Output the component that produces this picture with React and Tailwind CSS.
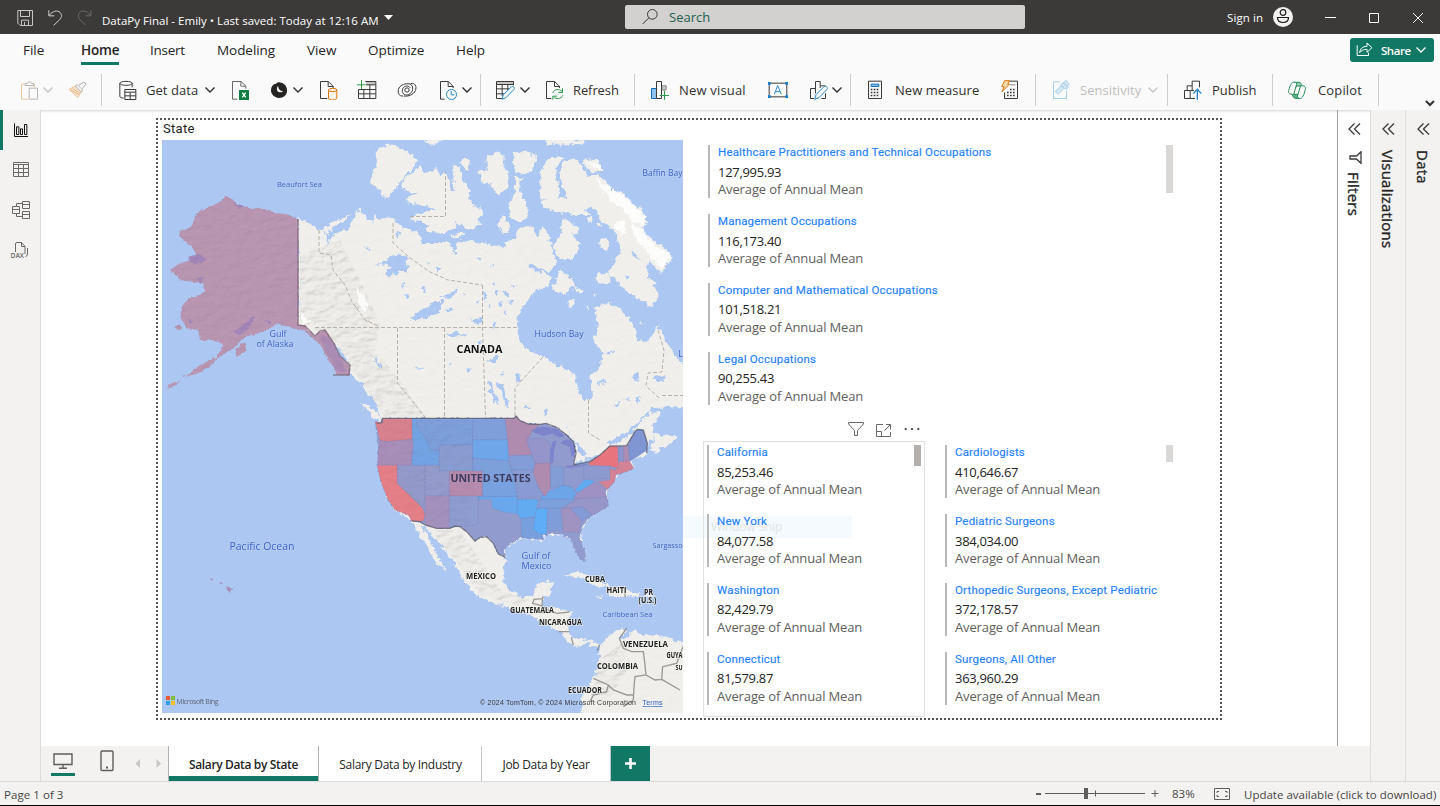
import React from "react";

/* ---------- shared pieces ---------- */

// Draws an icon on a grid of three units per pixel.
function Glyph({ x, y, w = 20, h = 20, className = "", children }) {
  return (
    <svg
      width={w}
      height={h}
      viewBox={`${x} ${y} ${w * 3} ${h * 3}`}
      className={"block shrink-0 " + className}
      fill="none"
      stroke="#3b3a39"
      strokeWidth="3"
    >
      {children}
    </svg>
  );
}

function Chevron({ className = "", color = "#323130" }) {
  return (
    <svg width="12" height="20" viewBox="0 0 12 20" className={"block shrink-0 " + className} fill="none" stroke={color} strokeWidth="1.4">
      <path d="M1.5 7.5 6 12l4.5-4.5" />
    </svg>
  );
}

function Sep({ className = "" }) {
  return <div className={"h-8 w-px shrink-0 bg-[#d0cecc] " + className} />;
}

/* ---------- title bar ---------- */

function TitleBar() {
  return (
    <header className="flex h-[34px] items-start bg-[#3b3a39] text-white">
      <Glyph x={48} y={24} w={20} h={20} className="mt-2 ml-4">
        <g stroke="#c8c6c4">
          <path d="M53.500 31.500H97.500V76.500H60.500L53.500 69.500Z" />
          <path d="M61.500 33V49.500H88.500V33M64.500 76V60.500H85.500V76M73.500 66V75" />
        </g>
      </Glyph>
      <Glyph x={141} y={24} w={18} h={20} className="mt-2 ml-[11px]">
        <path stroke="#d2d0ce" d="M146.500 31V47.500H163M148 46C158 32 172 30 180 37C188 46 184 54 178 60L161 76" />
      </Glyph>
      <Glyph x={231} y={24} w={18} h={20} className="mt-2 ml-3">
        <path stroke="#6e6c6a" d="M272.500 31V47.500H257M271 46C262 32 246 30 239 37C232 46 236 54 241 60L256 75" />
      </Glyph>
      <div className="mt-3 ml-[7px] w-[279px] text-[11.5px] leading-[17px] tracking-[0.02px] whitespace-nowrap">
        DataPy Final - Emily • Last saved: Today at 12:16 AM
      </div>
      <svg width="10" height="6" viewBox="0 0 10 6" className="mt-[15px] ml-[3px]">
        <path d="M0 0h9L4.500 5z" fill="#fff" />
      </svg>
      <div className="mt-[5px] ml-[231px] flex h-6 w-[400px] items-center rounded-[2px] bg-[#d2d1cf]">
        <Glyph x={486} y={24} w={18} h={18} className="ml-[17px]">
          <circle cx="517" cy="43" r="14.500" />
          <path d="M507 53 488 72" />
        </Glyph>
        <div className="ml-[9px] text-[13px] leading-5 text-[#1f5f50]">Search</div>
      </div>
      <div className="mt-[9px] ml-[202px] w-[38px] text-[11.5px] leading-[17px] tracking-[0.1px] whitespace-nowrap">Sign in</div>
      <svg width="20" height="20" viewBox="0 0 20 20" className="mt-[7px] ml-2">
        <circle cx="10" cy="10" r="10" fill="#f3f2f1" />
        <circle cx="10" cy="5.500" r="2.800" fill="none" stroke="#201f1e" strokeWidth="1.200" />
        <path d="M4.500 10.500h11c0 3.500-2.500 5-5.500 5s-5.500-1.500-5.500-5z" fill="none" stroke="#201f1e" strokeWidth="1.200" />
      </svg>
      <svg width="12" height="12" viewBox="0 0 12 12" className="mt-3 ml-8" stroke="#fff">
        <path d="M0 5.500h11" />
      </svg>
      <svg width="12" height="12" viewBox="0 0 12 12" className="mt-3 ml-[31px]" stroke="#fff" fill="none">
        <path d="M1.500 1.500h9v9h-9z" />
      </svg>
      <svg width="12" height="12" viewBox="0 0 12 12" className="mt-3 ml-8" stroke="#fff">
        <path d="M1 1l10 10M11 1 1 11" />
      </svg>
    </header>
  );
}

/* ---------- ribbon ---------- */

function RibbonTabs() {
  const tab = "h-8 shrink-0 whitespace-nowrap leading-[32px]";
  return (
    <nav className="flex h-8 bg-[#fafafa] pl-[23px] text-[13.500px] tracking-[-0.05px] text-[#252423]">
      <div className={tab + " w-[58px]"}>File</div>
      <div className={tab + " w-[69px]"}>
        <div className="flex w-[38px] flex-col font-semibold tracking-[-0.2px]">
          <span className="h-[28px]">Home</span>
          <span className="h-[3px] bg-[#117865]" />
        </div>
      </div>
      <div className={tab + " w-[67px] tracking-[-0.25px]"}>Insert</div>
      <div className={tab + " w-[90px]"}>Modeling</div>
      <div className={tab + " w-[61px]"}>View</div>
      <div className={tab + " w-[88px]"}>Optimize</div>
      <div className={tab + " flex-1"}>Help</div>
      <button className="mt-1 mr-[6px] flex h-6 w-[84px] items-center rounded-[3px] bg-[#117865] text-[11.5px] leading-6 font-semibold tracking-[-0.45px] text-white">
        <Glyph x={1185} y={126} w={18} h={16} className="ml-[5px]">
          <g stroke="#fff">
            <path d="M1191.500 136V166.500H1225.500V158" />
            <path d="M1199 158C1200 146 1208 139 1221 139V129L1236 143L1221 157V148C1210 148 1204 152 1199 158Z" />
          </g>
        </Glyph>
        <span className="ml-[8px] w-[34px] pt-px text-left">Share</span>
        <Chevron color="#fff" />
      </button>
    </nav>
  );
}

function Toolbar() {
  const label = "shrink-0 whitespace-nowrap text-[13px] leading-5 text-[#323130]";
  return (
    <div className="flex h-11 items-center bg-[#fafafa] pt-1 text-[#323130]">
      <div className="flex h-10 w-full items-center">
        <Glyph x={60} y={240} className="ml-5">
          <g stroke="#edc7a2">
            <path d="M85 297.500H64.500V252.500H75M100 252.500H103.500V262" />
            <path stroke="#b8b6b4" d="M75.500 256.500V250.500H82C83 244 94 244 95 250.500H101.500V256.500Z" />
            <path stroke="#b8b6b4" d="M87.500 264.500H112.500V297.500H87.500Z" />
          </g>
        </Glyph>
        <Chevron className="ml-[2px]" color="#c8c6c4" />
        <Glyph x={204} y={240} className="ml-[14px]">
          <g stroke="#b4b2b0">
            <path stroke="#eac39c" fill="#fbe6cd" d="M207 268L226 258L244 276L233 292Z" />
            <path d="M226 258L232 254L248 270L244 276Z" fill="#fafafa" />
            <path d="M236 256L252 246L258 252L247 266" />
            <path stroke="#e6b98c" d="M212 270L238 284M218 266L241 280" />
          </g>
        </Glyph>
        <Sep className="ml-[13px]" />
        <Glyph x={354} y={240} className="ml-[16px]">
          <ellipse cx="378" cy="250" rx="18.500" ry="6" />
          <path d="M359.500 250V289C359.500 292 364 294 371 294.500M396.500 250V262M374.500 268.500H407.500V298.500H374.500ZM374.500 276.500H407.500M374.500 287.500H407.500M390.500 277V298" />
        </Glyph>
        <div className={label + " ml-2 w-[58px] tracking-[0.05px]"}>Get data</div>
        <Chevron />
        <Glyph x={690} y={240} className="ml-[14px]">
          <path stroke="#6b6967" d="M712 297.500H697.500V244.500H723L737.500 258V266M722.500 245V258.500H737" />
          <path stroke="none" fill="#107c41" d="M717 270H747V300H717Z" />
          <path stroke="#fff" strokeWidth="4" d="M727 278L737 292M737 278L727 292" />
        </Glyph>
        <Glyph x={810} y={240} className="ml-5">
          <path stroke="none" fill="#252423" d="M828 251C834 245 840 246 846 249C856 252 861 262 861 270C862 286 850 294 837 294C822 292 812 282 813 269C814 258 820 252 828 251Z" />
          <path stroke="none" fill="#f3f2f1" d="M834 257C830 262 829 273 836 276C842 278 847 277 849 273C842 274 835 268 834 257Z" />
        </Glyph>
        <Chevron className="ml-[2px]" />
        <Glyph x={954} y={240} className="ml-[14px]">
          <path d="M982 295.500H961.500V244.500H985L999.500 259V264M984.500 245V259.500H1000" />
          <g stroke="#d8730a" fill="#fdf3e7">
            <path d="M985.500 270V294C985.500 302 1010.500 302 1010.500 294V270" />
            <ellipse cx="998" cy="270" rx="12.500" ry="5" />
          </g>
        </Glyph>
        <Glyph x={1071} y={240} className="ml-[19px]">
          <path fill="#c8c6c4" stroke="none" d="M1098 246H1127V254H1098Z" />
          <path d="M1096 244.500H1127.500V295.500H1075.500V268M1076 268.500H1127M1076 281.500H1127M1098 254.500H1127M1091.500 268V295M1109.500 254V295" />
          <path stroke="#2d9b4a" strokeWidth="3" d="M1071 254.500H1097M1084.500 240V267" />
        </Glyph>
        <Glyph x={1191} y={240} className="ml-5">
          <g strokeWidth="3">
            <path d="M1210 288C1196 290 1191 276 1197 264C1203 254 1216 249 1230 252C1238 255 1240 266 1236 274C1232 283 1222 287 1214 284C1206 280 1205 268 1211 262C1217 256 1227 257 1230 263" />
            <path d="M1232 251C1246 247 1251 260 1246 272C1240 284 1226 290 1212 288" />
            <circle cx="1221" cy="270" r="6.500" />
          </g>
        </Glyph>
        <Glyph x={1314} y={240} className="ml-[21px]">
          <path d="M1334 297.500H1321.500V244.500H1345L1359.500 259V264M1344.500 245V259.500H1360" />
          <circle cx="1354.500" cy="283.500" r="15" stroke="#2b88c8" fill="#fafafa" />
          <path stroke="#2b88c8" d="M1353.500 273V284.500H1363" />
        </Glyph>
        <Chevron className="ml-[3px]" />
        <Sep className="ml-[7px]" />
        <Glyph x={45} y={240} className="ml-[14px]">
          <path fill="#c8c6c4" stroke="none" d="M49 244H101V252H49Z" />
          <path d="M66 295.500H49.500V244.500H100.500V256M50 253.500H100M50 266.500H88M50 281.500H72M66.500 254V288M83.500 254V272" />
          <path stroke="#2b88c8" fill="#fafafa" d="M66 298L70 284L95 260C100 257 106 263 102 268L78 293Z" />
        </Glyph>
        <Chevron className="ml-[4px]" />
        <Glyph x={195} y={240} className="ml-[14px]">
          <path d="M214 295.500H199.500V244.500H224L238.500 259V264M223.500 245V259.500H239" />
          <path stroke="#2d9b4a" d="M218.500 279C222 267 238 265 246 275M247.500 265V277.500H235M248.500 286C244 297 228 299 220 290M218.500 299V288.500H231" />
        </Glyph>
        <div className={label + " ml-[8px] w-[46px] tracking-[-0.1px]"}>Refresh</div>
        <Sep className="ml-[15px]" />
        <Glyph x={510} y={240} className="ml-[15px]">
          <path fill="#8fc3ee" stroke="#0f6cbd" d="M514.500 265.500H529.500V295.500H514.500Z" />
          <path fill="#c8c6c4" stroke="#8a8886" d="M545.500 257.500H558.500V270H545.500Z" />
          <path fill="#fafafa" d="M529.500 244.500H544.500V295.500H529.500Z" />
          <path stroke="#2d9b4a" strokeWidth="3.500" d="M539 286.500H567M553.500 272V299" />
        </Glyph>
        <div className={label + " ml-[9px] w-[67px] tracking-[0.18px]"}>New visual</div>
        <Glyph x={864} y={240} className="ml-[22px]">
          <path d="M867.500 249.500H920.500V290.500H867.500Z" />
          <path fill="#0f7bd0" stroke="none" d="M864 246h8v8h-8zM916 246h8v8h-8zM864 286h8v8h-8zM916 286h8v8h-8z" />
          <path stroke="#2b88c8" strokeWidth="3" d="M883 283L893 257L904 283M887 275H900" />
        </Glyph>
        <Glyph x={987} y={240} className="ml-[21px]">
          <path d="M1002 295.500H991.500V265.500H1005M1006.500 280V244.500H1020.500V264M1021 257.500H1036.500M1036.500 280V295.500H1024" />
          <path stroke="#2b88c8" fill="#fafafa" d="M1004 298L1008 284L1032 260C1038 256 1045 263 1041 268L1017 293Z" />
        </Glyph>
        <Chevron className="ml-[2px]" />
        <Sep className="ml-[7px]" />
        <Glyph x={1155} y={240} className="ml-[14px]">
          <path d="M1165.500 243.500H1204.500V295.500H1165.500Z" />
          <path fill="#8fc3ee" stroke="#0f6cbd" d="M1173.500 252.500H1196.500V259.500H1173.500Z" />
          <path strokeWidth="5" strokeDasharray="5 4" d="M1172 268.500H1196M1172 277.500H1196M1172 286.500H1196" />
        </Glyph>
        <div className={label + " ml-[10px] w-[85px] tracking-[0.03px]"}>New measure</div>
        <Glyph x={120} y={240} className="ml-5">
          <path d="M147 243.500H172.500V295.500H133.500V278" />
          <path fill="#fbdcae" stroke="#d8730a" d="M134 242H149L143 253H148L126 275L132 260H125Z" />
          <path stroke="#8a8886" d="M150 254.500H166" />
          <path strokeWidth="5" strokeDasharray="5 4" d="M150 268.500H166M141 277.500H166M141 286.500H166" />
        </Glyph>
        <Sep className="ml-[15px]" />
        <Glyph x={276} y={240} className="ml-[16px]">
          <g stroke="#a9cfe8">
            <path d="M300 245.500H280.500V295.500H319.500V272" />
            <path fill="#d5e8f5" d="M286 274L304 257L312 265L294 283ZM302 255L308 248L325 262L318 268ZM311 247L318 241L328 252L322 259Z" />
          </g>
        </Glyph>
        <div className={label + " ml-[8px] w-[64px] tracking-[0.05px] text-[#c0bebc]"}>Sensitivity</div>
        <Chevron className="ml-[3px]" color="#c8c6c4" />
        <Sep className="ml-[8px]" />
        <Glyph x={669} y={240} className="ml-[15px]">
          <path d="M681.500 271V257.500H696M696.500 271V243.500H718.500V262M673.500 271.500H690.500V295.500H673.500ZM690.500 295.500H705M691 271.500H702" />
          <path stroke="#2b88c8" strokeWidth="4" d="M712 299V269M700 281L712 268L724 281" />
        </Glyph>
        <div className={label + " ml-[9px] w-[46px]"}>Publish</div>
        <Sep className="ml-[14px]" />
        <Glyph x={981} y={240} className="ml-[14px]">
          <g stroke="#1f8a56" strokeLinejoin="round">
            <path fill="#9fd0b4" d="M1002 247H1018C1022 247 1024 253 1026 258H1012L1008 262H997Z" />
            <path fill="#5fb386" d="M1001 283H1013L1018 295H1006C1001 295 998 288 997 283Z" />
            <path fill="#fafafa" d="M1000 247C992 249 988 264 986 272C984 281 990 283 1001 283L1010 253C1012 247 1006 246 1000 247Z" />
            <path fill="#fafafa" d="M1022 295C1030 292 1034 278 1036 268C1038 259 1032 257 1022 257L1013 286C1011 293 1014 296 1022 295Z" />
          </g>
        </Glyph>
        <div className={label + " ml-[11px] w-[46px] tracking-[0.15px]"}>Copilot</div>
        <Sep className="ml-[14px]" />
        <svg width="10" height="7" viewBox="0 0 10 7" className="mt-[27px] ml-[46px]" fill="none" stroke="#323130" strokeWidth="2">
          <path d="M1 1l4 4 4-4" />
        </svg>
      </div>
    </div>
  );
}

/* ---------- left navigation ---------- */

function ViewRail() {
  return (
    <aside className="flex w-[41px] shrink-0 flex-col border-r border-[#dedcda] bg-[#f3f2f1]">
      <div className="flex h-10 border-l-[3px] border-[#117865]">
        <Glyph x={36} y={33} w={18} h={18} className="mt-[11px] ml-[9px]">
          <path stroke="#111" d="M43.500 40V79.500H84M49.500 50.500H56.500V73.500H49.500ZM61.500 56.500H67.500V73.500H61.500ZM73.500 43.500H80.500V73.500H73.500Z" />
        </Glyph>
      </div>
      <div className="flex h-10">
        <Glyph x={36} y={153} w={18} h={18} className="mt-[11px] ml-3">
          <path stroke="#6b6967" d="M40.500 157.500H85.500V199.500H40.500ZM40 163.500H86M40 175.500H86M40 187.500H86M55.500 163V199M70.500 163V199" />
        </Glyph>
      </div>
      <div className="flex h-10">
        <Glyph x={33} y={270} w={20} h={20} className="mt-[10px] ml-[11px]">
          <path stroke="#6b6967" d="M67.500 274.500H88.500V295.500H67.500ZM67 283.500H88M37.500 289.500H58.500V310.500H37.500ZM37 298.500H58M67.500 304.500H88.500V325.500H67.500ZM67 313.500H88M67 280.500H49.500V289M49.500 310V319.500H67" />
        </Glyph>
      </div>
      <div className="flex h-10">
        <svg width="20" height="20" viewBox="0 0 20 20" className="mt-[11px] ml-[10px]" fill="none" stroke="#6b6967">
          <path d="M5.500 11V3q0-1.500 1.500-1.500h4.500l3.500 4V13M11.500 1.500v4h3.500M17.500 7V13q0 2-2 2.500" />
          <text x="0.500" y="17.200" fontSize="6.500" fontWeight="600" stroke="none" fill="#6b6967" textLength="13.500" lengthAdjust="spacingAndGlyphs">DAX</text>
        </svg>
      </div>
    </aside>
  );
}

/* ---------- map ---------- */

const LAND =
  "M298 219L308 222 318 230 325 228 333 222 352 215 347 220 330 229 328 238 337 233 350 227 355 215 360 208 367 218 373 223 375 213 378 220 393 218 400 225 413 230 423 240 420 243 450 243 455 255 458 240 477 242 503 247 510 240 515 238 518 228 527 225 533 227 538 238 542 225 547 230 552 250 557 262 550 272 535 267 552 277 547 287 533 292 527 302 520 312 517 323 518 338 525 348 543 357 563 368 575 373 577 387 583 400 590 400 593 393 590 377 600 367 603 353 593 340 598 327 595 307 607 303 618 307 627 317 635 327 638 340 647 342 652 333 658 327 667 343 677 360 690 372 690 407 653 408 643 417 633 427 620 436 606 444 614 444 627 437 640 423 650 413 662 412 653 425 654 434 668 436 678 438 668 445 656 452 650 450 655 438 648 441 646 455 638 457 631 462 634 468 625 471 615 475 614 482 608 490 608 505 590 517 581 530 582 542 586 556 583 562 576 552 572 540 562 534 545 536 543 540 522 538 507 547 505 557 503 577 508 590 523 597 532 597 537 583 553 581 550 595 543 597 543 607 557 608 572 612 569 622 568 632 573 638 590 640 600 645 597 649 587 643 578 647 568 642 560 633 550 625 530 615 510 608 487 600 470 590 465 582 457 567 442 547 428 530 422 525 432 545 447 572 435 563 427 547 412 522 395 510 385 490 379 467 380 443 378 422 383 420 378 413 376 402 366 392 362 384 352 376 349 365 340 350 325 332 315 336 298 326ZM361 404L366 404 376 412 383 421 376 419 367 411Z";

const ARCTIC = [
  "M5 235L10 210 60 165 75 190 110 175 120 195 135 185 150 215 152 240 163 240 160 200 160 165 180 170 190 210 210 240 205 265 250 310 235 330 245 345 215 360 175 345 170 330 165 355 130 370 80 365 85 345 30 325 60 308 112 300 60 285 20 280 20 265 50 250Z",
  "M178 158L195 143 210 155 205 180 190 172Z",
  "M260 140L285 130 295 125 315 140 310 165 325 200 322 235 295 258 275 225 245 215 238 185 260 180Z",
  "M340 130L360 123 412 135 395 185 375 192 350 185 340 170Z",
  "M345 200L365 205 355 235 380 275 385 320 360 340 330 320 325 285 345 240Z",
  "M290 340L310 320 330 345 325 370 300 360Z",
  "M420 265L422 190 440 150 465 138 487 140 470 175 468 205 480 235 475 265 450 270Z",
  "M480 200L490 155 525 145 545 165 560 200 590 195 625 215 632 238 660 245 680 255 700 290 720 290 735 310 730 325 748 340 725 350 740 372 755 390 790 410 820 440 800 465 785 490 760 465 725 455 700 425 665 425 655 390 640 360 600 330 580 290 550 300 575 315 520 315 470 305 430 290 425 270 500 260 490 230Z",
  "M548 148L590 150 612 182 580 188 556 170Z",
  "M690 410L700 440 740 460 745 500 775 540 770 570 755 590 730 575 700 555 665 530 650 510 625 495 635 515 610 522 585 510 590 490 625 490 640 460 655 435Z",
  "M485 325L520 340 535 360 520 375 540 410 520 445 495 450 470 440 460 405 485 370Z",
  "M475 480L505 495 530 535 548 540 540 548 515 530 490 555 485 545 455 540 465 520Z",
  "M598 402C598 378 628 378 628 402C624 428 602 425 598 402Z",
  "M505 575L525 567 520 585 508 588Z",
  "M556 590L565 588 562 606Z",
  "M70 88L128 88 105 104 85 103Z",
  "M440 88L552 88 550 102 440 105Z",
  "M-70 0L-25 -7 20 15 55 45 10 95 -15 120 -20 140 -45 155 -60 130 -85 115 -85 80 -70 50Z",
  "M720 635L730 640 725 648ZM580 555L590 548 586 560ZM690 530L672 520 680 545Z",
  "M155 378L185 365 200 372 170 385Z",
  "M560 330L575 322 572 340ZM590 345L600 338 604 352Z",
];

const LAKES =
  "M0 455L25 470 20 490 5 480ZM40 625L60 600 85 590 105 575 135 570 115 590 95 600 80 620 45 630ZM120 560L150 552 172 535 170 548 150 565ZM135 672L160 668 205 674 150 682ZM265 820L275 815 280 850 290 860 298 890 280 870 270 845ZM290 815L308 822 318 860 328 890 318 890 305 850ZM262 755L290 735 298 738 275 762ZM430 900L442 898 440 915 430 912ZM370 888L392 890 380 898ZM250 540L262 550 258 575 250 565ZM275 515L290 520 282 528ZM305 545L330 550 320 560ZM295 580L306 570 302 592ZM310 605L320 598 318 618ZM210 630L240 625 244 642 222 640ZM273 640L288 636 282 660ZM135 600L160 595 142 610ZM78 460L96 452 90 462ZM110 470L122 472 118 490ZM235 445L240 440 240 452ZM272 468L282 464 280 476ZM335 525L352 530 340 536ZM592 815L615 808 625 818 600 824ZM620 728L645 718 630 734ZM695 795L715 788 718 808 700 812ZM765 800L795 795 790 812 765 812ZM642 888L660 872 652 895ZM670 870L690 866 680 874ZM710 860L720 858 715 882ZM45 772L68 774 60 778ZM145 760L156 765 152 770ZM300 790L312 785 306 796ZM675 495L688 498 682 512ZM345 795L360 792 366 812 350 818ZM8 520L18 530 10 536ZM190 548L200 552 190 560ZM380 460L410 470 440 482 420 486 395 475ZM280 545L290 540 292 556ZM262 590L270 580 274 596ZM225 575L236 570 232 582ZM325 575L345 570 336 582ZM228 700L240 694 236 716ZM200 780L212 776 206 788Z";

const NW_LAKES =
  "M1120 460L1150 455 1170 440 1200 432 1225 440 1218 460 1222 478 1200 485 1170 500 1150 490 1175 470 1150 462ZM1095 408L1105 412 1115 430 1105 425ZM1190 365L1200 370 1192 385ZM1230 625L1255 605 1290 595 1320 580 1320 605 1280 625 1240 630ZM1212 550L1225 555 1218 562ZM1265 530L1285 540 1270 548ZM1245 772L1270 775 1255 779ZM1120 735L1135 755 1146 780 1132 765ZM975 365L990 380 984 408 978 390Z";

const ALASKA =
  "M678 257L700 270 715 290 740 290 750 298 780 293 830 310 860 312 895 328 895 645 915 645 945 680 960 663 975 660 1000 695 1020 740 1050 765 1048 795 1010 795 1000 770 985 750 965 710 945 690 915 665 870 650 830 643 800 660 760 675 735 680 700 715 665 735 635 765 595 790 558 800 600 765 650 740 670 705 645 690 600 690 595 660 560 655 540 620 545 590 565 565 590 560 612 545 610 520 575 515 540 510 510 478 540 460 575 450 590 435 575 410 535 375 545 360 575 350 590 310 625 290 650 283ZM705 720L735 695 738 720 710 742ZM522 650L540 643 548 655 535 660ZM500 835L515 820 540 812 530 825ZM548 798L556 793 552 802Z";

const USA =
  "M45 65L65 68 68 55 462 55 468 48 480 62 505 72 540 73 558 70 590 82 620 105 640 125 648 160 640 195 690 185 720 165 750 138 800 137 825 95 832 88 850 90 862 130 860 150 835 168 810 183 812 200 822 205 800 215 765 225 762 245 745 270 735 275 745 300 745 318 700 345 672 370 660 395 662 420 678 465 676 485 660 480 640 440 635 420 605 402 575 402 545 405 550 420 510 415 485 412 440 440 432 450 437 472 415 462 400 430 380 410 360 412 345 423 320 395 300 380 285 378 270 385 230 385 195 375 180 365 155 363 145 345 105 330 85 300 70 265 60 235 52 200 55 150Z";

const STATES = [
  ["#d9828f", "M45 65L68 68 68 55 156 55 156 118 110 122 85 125 60 122 55 100Z"],
  ["#a88fba", "M60 122L85 125 110 122 156 118 160 140 155 165 155 196 52 196 55 150Z"],
  ["#e57f88", "M52 196L112 196 112 250 188 325 195 345 190 363 155 363 145 345 105 330 85 300 70 265 60 235Z"],
  ["#949acb", "M112 196L195 196 195 290 188 320 112 250Z"],
  ["#74a4e4", "M156 55L170 55 175 85 205 125 210 150 238 152 238 196 155 196 160 140Z"],
  ["#7d9fda", "M168 55L338 55 338 135 238 135 238 152 210 150 200 115 172 85Z"],
  ["#8a9dd2", "M238 135L338 135 338 213 238 213Z"],
  ["#959bcc", "M195 196L238 196 238 213 268 213 268 288 195 288Z"],
  ["#b68cae", "M268 213L368 213 368 288 268 288Z"],
  ["#a591be", "M195 288L268 288 268 385 230 385 195 375Z"],
  ["#8e9cd0", "M268 288L355 288 355 375 300 378 268 385Z"],
  ["#7f9fda", "M338 55L435 55 443 120 338 120Z"],
  ["#6ea6e9", "M338 120L443 120 445 182 338 175Z"],
  ["#7d9fda", "M338 175L445 182 465 240 368 240 368 213 338 213Z"],
  ["#78a1df", "M368 240L465 240 472 290 368 290Z"],
  ["#69a8ed", "M355 290L472 290 472 342 430 335 397 325 395 298 355 298Z"],
  ["#b08bb0", "M435 55L462 55 468 48 480 62 505 72 540 73 515 95 500 125 510 150 520 165 447 167 443 120Z"],
  ["#829dd7", "M447 167L520 165 530 190 520 210 455 210Z"],
  ["#889cd3", "M455 210L520 210 535 260 550 290 475 295 470 240Z"],
  ["#63abf1", "M472 298L535 298 525 350 480 355 472 340Z"],
  ["#799fdd", "M482 355L525 352 520 388 545 390 550 415 485 415Z"],
  ["#5eadf6", "M530 325L562 325 560 403 540 403 520 388 525 350Z"],
  ["#7f9ed9", "M562 325L600 325 607 390 565 395Z"],
  ["#7d9fdb", "M540 297L650 297 605 325 535 325Z"],
  ["#6da5e9", "M545 290L575 270 610 255 635 262 650 280 640 297 540 297Z"],
  ["#b08bb0", "M525 190L570 188 572 260 555 290 535 260 520 220Z"],
  ["#839dd6", "M572 200L610 200 610 255 572 265Z"],
  ["#8f9bcf", "M610 205L670 195 670 235 640 262 612 255Z"],
  ["#61abf3", "M672 240L690 240 705 245 665 282 645 270Z"],
  ["#8d9ad0", "M670 198L750 198 752 235 672 238Z"],
  ["#e8757d", "M685 190L720 165 750 138 773 138 775 205 750 198 690 196Z"],
  ["#d48296", "M775 185L808 183 822 205 800 215 765 225 755 212 775 205Z"],
  ["#d48296", "M750 205L770 215 764 245 748 262 742 268 715 245 750 240Z"],
  ["#9f92c2", "M650 280L705 245 735 265 738 290 640 297Z"],
  ["#9896c8", "M650 297L740 292 745 318 700 345 665 320 630 325 605 325Z"],
  ["#a092c1", "M605 325L632 325 665 362 655 398 610 395Z"],
  ["#859bd6", "M632 325L665 320 695 345 665 362Z"],
  ["#9594cb", "M500 115L550 115 572 130 570 188 525 190 510 150Z"],
  ["#8b96cf", "M776 140L790 139 790 183 776 185Z"],
  ["#ac8db3", "M790 139L805 138 808 183 790 183Z"],
  ["#8096d3", "M805 138L825 95 832 88 850 90 862 130 860 150 835 168 810 183Z"],
];

const US_LAKES =
  "M510 92L545 80 590 85 615 108 600 112 575 100 550 108 530 100ZM578 125L590 122 582 150 580 185 570 195 570 150ZM600 130L625 118 645 135 645 175 635 165 630 140ZM615 198L650 196 685 192 660 202 625 205Z";

const SOUTH =
  "M700 835L715 800 720 740 745 705 790 685 795 695 775 720 800 710 825 690 850 705 925 710 940 720 990 740 990 950 665 950 665 915 670 880 690 850ZM615 525L650 515 700 530 735 550 750 560 720 565 690 545 660 528 620 530ZM745 565L790 568 840 580 825 588 790 592 745 585ZM855 582L880 583 878 590 856 590ZM702 588L730 590 718 596Z";

function MapLabel({ x, y, size = 8.5, color = "#3f63c4", weight = 400, width, children }) {
  return (
    <text x={x} y={y} fontSize={size} fill={color} fontWeight={weight} textAnchor="middle" textLength={width} lengthAdjust="spacingAndGlyphs" stroke={weight > 400 ? "#f4f3f0" : "#b9cff4"} strokeWidth="1.6" strokeOpacity="0.7" paintOrder="stroke">
      {children}
    </text>
  );
}

function StateMap() {
  return (
    <svg width="521" height="573" viewBox="162 140 521 573" className="block shrink-0" fontFamily="'Open Sans', 'Noto Sans', sans-serif">
      <defs>
        <filter id="rough" x="-5%" y="-5%" width="110%" height="110%">
          <feTurbulence type="fractalNoise" baseFrequency="0.2" numOctaves="3" seed="4" result="n" />
          <feDisplacementMap in="SourceGraphic" in2="n" scale="7" xChannelSelector="R" yChannelSelector="G" />
        </filter>
        <filter id="fine" x="-5%" y="-5%" width="110%" height="110%">
          <feTurbulence type="fractalNoise" baseFrequency="0.3" numOctaves="2" seed="9" result="n" />
          <feDisplacementMap in="SourceGraphic" in2="n" scale="3.5" xChannelSelector="R" yChannelSelector="G" />
        </filter>
        <filter id="relief" x="0" y="0" width="100%" height="100%">
          <feTurbulence type="fractalNoise" baseFrequency="0.09 0.15" numOctaves="4" seed="12" result="n" />
          <feDiffuseLighting in="n" surfaceScale="2.2" lightingColor="#ffffff" result="l">
            <feDistantLight azimuth="230" elevation="60" />
          </feDiffuseLighting>
          <feComposite in="l" in2="SourceGraphic" operator="in" />
        </filter>
      </defs>
      <rect x="162" y="140" width="521" height="573" fill="#abc7f2" />
      <g filter="url(#rough)" fill="#f0efeb">
        <path d={LAND} />
        <g transform="translate(400 110) scale(.33333)">
          {ARCTIC.map((d, i) => (
            <path key={i} d={d} transform={i === 17 ? "translate(0 110)" : undefined} />
          ))}
        </g>
        <g transform="translate(360 400) scale(.33333)">
          <path d={SOUTH} />
        </g>
      </g>
      <g filter="url(#rough)" fill="#abc7f2">
        <path d={LAKES} transform="translate(400 110) scale(.33333)" />
        <path d={NW_LAKES} transform="translate(0 110) scale(.33333)" />
        <path d="M566 424L571 440 573 457 566 470 563 462 573 452ZM570 437L580 446 588 455 582 456ZM574 463L590 458 602 455 590 465 576 466Z" />
      </g>
      <g filter="url(#relief)" opacity="0.05" style={{ mixBlendMode: "multiply" }}>
        <path d={LAND} />
        <path d={SOUTH} transform="translate(360 400) scale(.33333)" />
      </g>
      <g filter="url(#relief)" opacity="0.34" style={{ mixBlendMode: "multiply" }}>
        <path d="M300 255L340 240 365 290 380 325 375 350 400 380 425 417 384 417 370 394 360 380 350 365 335 340 300 322ZM430 530L460 530 480 560 500 590 530 600 520 606 480 595 455 560ZM600 660L625 640 630 665 605 705 590 700Z" />
      </g>
      <g filter="url(#rough)" fill="#fff">
        <path transform="translate(400 110) scale(.33333)" d="M560 155L605 165 600 180ZM585 205L640 240 690 270 735 320 735 345 700 340 670 300 620 260ZM690 340L730 360 755 400 815 435 785 478 745 430 700 380ZM640 340L670 330 680 370 660 375Z" opacity="0.8" />
        <path d="M356 285L366 300 366 315 358 305ZM300 313L312 322 302 324Z" opacity="0.8" />
      </g>
      <g fill="none" stroke="#b9b2aa" strokeWidth="1" strokeDasharray="4 2">
        <path d="M319 230V253L331 255 333 270 345 285 352 302 365 320 378 326M315 327.500H517M397.500 328V383L425 417M444.500 328V417M482.500 285V328L485.500 417M393 223V243L410 258 430 272 448 280 482 285M543 357L515 388V417M410 216.500H445.500V172M588.500 400V433L600 440M658 330L664 350 662 372 648 373 646 386 659 398M662 395.500H683" />
      </g>
      <g filter="url(#fine)">
        <path d={ALASKA} transform="translate(0 110) scale(.33333)" fill="#b996b2" />
        <g transform="translate(0 110) scale(.33333)" fill="#a286b8">
          <path d="M565 440L595 432 620 448 590 462 570 455ZM700 665L730 645 760 618 765 622 740 660 720 675ZM795 630L815 635 808 646ZM700 275L735 290 715 295ZM590 505L612 500 600 520ZM565 625L578 632 568 645Z" />
          <path d="M960 675L985 680 1005 715 1025 750 1040 785 1012 785 1000 765 982 735Z" opacity="0.6" />
        </g>
        <path d="M210 578l3 1-1 2zM219 582l4 1-1 2zM226 586l7 3-3 4-3-3z" fill="#a58fb8" />
      </g>
      <g filter="url(#relief)" opacity="0.14" style={{ mixBlendMode: "multiply" }}>
        <path d={ALASKA} transform="translate(0 110) scale(.33333)" />
      </g>
      <path d="M298 219V325L305 326 315 336 320 331 325 330 333 342 340 356 350 365 349 375H333" fill="none" stroke="#75606e" strokeOpacity="0.65" strokeWidth="1.500" />
      <g filter="url(#fine)">
        <g transform="translate(360 400) scale(.33333)">
          <path d={USA} fill="#929bcd" />
          <path d={US_LAKES} fill="#7d84cc" />
        </g>
      </g>
      <g transform="translate(360 400) scale(.33333)">
        {STATES.map(([fill, d], i) => (
          <path key={i} d={d} fill={fill} stroke="#5f6ea8" strokeOpacity="0.3" strokeWidth="2" strokeDasharray="7 4" />
        ))}
        <path d={US_LAKES} fill="#7d84cc" opacity="0.6" />
      </g>
      <g filter="url(#relief)" opacity="0.14" style={{ mixBlendMode: "multiply" }}>
        <path d="M378 418H470L475 480 470 525 450 528 422 522 390 505 378 470Z" />
      </g>
      <g transform="translate(360 400) scale(.33333)" fill="none" stroke="#585a68" strokeWidth="4" strokeOpacity="0.7">
        <path d="M50 70L65 68 68 55 462 55 468 48 480 62 505 72 540 73 558 70 590 82 620 105 640 125 648 160 640 195 690 185 720 165 750 138 800 137 825 95 832 88 850 90 862 130 860 160M155 363L180 365 195 375 230 385 270 385 285 378 300 380 320 395 345 423 360 412 380 410 400 430 415 462 437 472" />
        <path stroke="#777574" d="M548 590L546 618 518 610 522 598 548 596M546 618L560 628 548 640M560 628L590 640 628 636M596 695L628 695M634 712L640 735M718 735L712 752M800 685L778 715 790 745 815 755 850 755 855 795 858 825 825 830 822 860 820 900M700 835L745 855 760 870 800 885 820 885M858 825L885 840 905 838 908 800 950 790 969 740M905 838L960 870M745 855L740 875 700 885 690 905M820 900L790 920M795 570V592" />
      </g>
      <MapLabel x={299.500} y={187} size={8} width={45}>Beaufort Sea</MapLabel>
      <MapLabel x={662.500} y={175.500} size={8.500} width={40}>Baffin Bay</MapLabel>
      <MapLabel x={559} y={336.500} size={9} width={49}>Hudson Bay</MapLabel>
      <MapLabel x={278} y={336.500} size={9} width={17}>Gulf</MapLabel>
      <MapLabel x={275} y={346.500} size={9} width={37}>of Alaska</MapLabel>
      <MapLabel x={262} y={549.500} size={10} width={65}>Pacific Ocean</MapLabel>
      <MapLabel x={536} y={559} size={9} width={29}>Gulf of</MapLabel>
      <MapLabel x={536.500} y={569} size={9} width={30}>Mexico</MapLabel>
      <MapLabel x={667.500} y={547.500} size={8} width={30}>Sargasso</MapLabel>
      <MapLabel x={627.500} y={617} size={8} width={50}>Caribbean Sea</MapLabel>
      <MapLabel x={680.500} y={357} size={8.500}>L</MapLabel>
      <MapLabel x={479.500} y={352.500} size={10.500} color="#111" weight={700} width={46}>CANADA</MapLabel>
      <text x="490.500" y="482" fontSize="11" fontWeight="700" fill="#3c3c5e" textAnchor="middle" textLength="80" lengthAdjust="spacingAndGlyphs">UNITED STATES</text>
      <MapLabel x={481} y={579} color="#222" weight={700} size={8.500} width={30}>MEXICO</MapLabel>
      <MapLabel x={595} y={581.500} color="#222" weight={700} size={8} width={20}>CUBA</MapLabel>
      <MapLabel x={616.500} y={593} color="#222" weight={700} size={8} width={20}>HAITI</MapLabel>
      <MapLabel x={648.500} y={595} color="#222" weight={700} size={8} width={9}>PR</MapLabel>
      <MapLabel x={647.500} y={603} color="#222" weight={700} size={8} width={18}>(U.S.)</MapLabel>
      <MapLabel x={532} y={613} color="#222" weight={700} size={8} width={44}>GUATEMALA</MapLabel>
      <MapLabel x={560.500} y={624.500} color="#222" weight={700} size={8} width={43}>NICARAGUA</MapLabel>
      <MapLabel x={645.500} y={647} color="#222" weight={700} size={8} width={45}>VENEZUELA</MapLabel>
      <MapLabel x={674.500} y={658} color="#222" weight={700} size={8} width={16}>GUYA</MapLabel>
      <MapLabel x={679} y={669.500} color="#222" weight={700} size={7.500} width={7}>SU</MapLabel>
      <MapLabel x={617.500} y={668.500} color="#222" weight={700} size={8} width={41}>COLOMBIA</MapLabel>
      <MapLabel x={585} y={692.500} color="#222" weight={700} size={8} width={34}>ECUADOR</MapLabel>
      <g>
        <path d="M166 696h4v4h-4z" fill="#e8593a" />
        <path d="M171 696h4v4h-4z" fill="#7fba3c" />
        <path d="M166 701h4v4h-4z" fill="#2f9de8" />
        <path d="M171 701h4v4h-4z" fill="#f5bc2a" />
        <text x="176.500" y="703.500" fontSize="7" fill="#5e6776" textLength="42">Microsoft Bing</text>
      </g>
      <g fontSize="7" fontFamily="'Liberation Sans', Arial, sans-serif">
        <text x="480" y="705" fill="#3a3a3a" textLength="156">© 2024 TomTom, © 2024 Microsoft Corporation</text>
        <text x="642.500" y="705" fill="#2f5fc4" textLength="20" textDecoration="underline">Terms</text>
      </g>
    </svg>
  );
}

/* ---------- card lists ---------- */

const OCCUPATIONS = [
  ["Healthcare Practitioners and Technical Occupations", "127,995.93"],
  ["Management Occupations", "116,173.40"],
  ["Computer and Mathematical Occupations", "101,518.21"],
  ["Legal Occupations", "90,255.43"],
];
const BY_STATE = [
  ["California", "85,253.46"],
  ["New York", "84,077.58"],
  ["Washington", "82,429.79"],
  ["Connecticut", "81,579.87"],
];
const JOBS = [
  ["Cardiologists", "410,646.67"],
  ["Pediatric Surgeons", "384,034.00"],
  ["Orthopedic Surgeons, Except Pediatric", "372,178.57"],
  ["Surgeons, All Other", "363,960.29"],
];

function CardList({ rows }) {
  return (
    <ul className="flex-1">
      {rows.map(([title, value], i) => (
        <li key={title} className={"flex " + (i === rows.length - 1 ? "h-[53px]" : "h-[69px]")}>
          <div className="h-[53px] w-[2px] shrink-0 bg-[#bab8b7]" />
          <div className="pl-2 whitespace-nowrap">
            <div className="font-[Roboto,sans-serif] text-[11.5px] leading-[14px] tracking-[0.18px] text-[#1f82ff] [-webkit-text-stroke:0.15px_#1f82ff]">{title}</div>
            <div className={"text-[13px] leading-[15px] tracking-[-0.3px] text-[#252423] " + (i > 1 ? "mt-[5px] mb-px" : "mt-[6px]")}>{value}</div>
            <div className="text-[13px] leading-[19px] tracking-[-0.13px] text-[#605e5c]">Average of Annual Mean</div>
          </div>
        </li>
      ))}
    </ul>
  );
}

function ReportCanvas() {
  return (
    <section className="relative flex h-[602px] w-[1066px] border-2 border-dotted border-[#555352]">
      <div className="absolute top-[396px] left-[525px] h-[22px] w-[169px] bg-[#f4fafe] pl-7 text-[12px] leading-[22px] tracking-[-0.15px] text-[#e4e6e7]">Window Snip</div>
      <div className="ml-1 w-[521px] shrink-0">
        <h1 className="h-5 pl-px font-[Roboto,sans-serif] text-[13px] leading-[18px] tracking-[0.3px] text-[#252423]">State</h1>
        <StateMap />
      </div>
      <div className="relative ml-5 flex-1 pt-[25px]">
        <div className="ml-[5px] flex h-[272px]">
          <CardList rows={OCCUPATIONS} />
          <div className="mr-[47px] h-12 w-[7px] bg-[#d9d8d7]" />
        </div>
        <div className="flex h-[24px] items-start justify-end pr-[300px]">
          <svg width="16" height="16" viewBox="0 0 16 16" className="mt-[5px]" fill="none" stroke="#6b6967">
            <path d="M.5.500h15v1.500L9.500 8.500v5h-3v-5L.5 2z" />
          </svg>
          <svg width="15" height="13" viewBox="0 0 15 13" className="mt-[7px] mr-px ml-[12px]" fill="none" stroke="#6b6967">
            <path d="M7 .500H.500v12h14V8M14.500 5.500V.500H10M14.500.500 8.500 6.500M.500 7.500h5v5" />
          </svg>
          <svg width="16" height="4" viewBox="0 0 16 4" className="mt-[10px] ml-[12px]" fill="#605e5c">
            <circle cx="1.700" cy="2" r="1.200" />
            <circle cx="8" cy="2" r="1.200" />
            <circle cx="14.300" cy="2" r="1.200" />
          </svg>
        </div>
        <div className="flex">
          <div className="flex h-[276px] w-[222px] border border-[#e3e2e1] pt-[3px] pl-[3px]">
            <CardList rows={BY_STATE} />
            <div className="mr-[3px] h-[21px] w-[7px] bg-[#b3b0ad]" />
          </div>
          <div className="flex flex-1 pt-1 pl-5">
            <CardList rows={JOBS} />
            <div className="mr-[47px] h-[17px] w-[7px] bg-[#d9d8d7]" />
          </div>
        </div>
      </div>
    </section>
  );
}

/* ---------- right-hand panes ---------- */

function Collapse() {
  return (
    <svg width="13" height="12" viewBox="0 0 13 12" fill="none" stroke="#3b3a39" strokeWidth="1.300" className="block">
      <path d="M6.500.500 1 6l5.500 5.500M12 .500 6.500 6 12 11.500" />
    </svg>
  );
}

function Pane({ title, className, children }) {
  return (
    <aside className={"flex shrink-0 flex-col items-center pt-[13px] " + className}>
      <Collapse />
      {children}
      <span className="text-[15px] leading-5 tracking-[0.25px] text-[#252423] [-webkit-text-stroke:0.35px_#252423] [writing-mode:vertical-rl]">{title}</span>
    </aside>
  );
}

/* ---------- bottom ---------- */

function PageTabs() {
  const tab = "h-[35px] shrink-0 bg-white text-center text-[12px] leading-[37px] tracking-[-0.3px] whitespace-nowrap text-[#252423]";
  return (
    <div className="flex h-[35px] bg-[#f3f2f1]">
      <div className="ml-[10px] flex w-6 flex-col items-center">
        <svg width="20" height="19" viewBox="0 0 20 19" className="mt-[6px]" fill="none" stroke="#605e5c" strokeWidth="1.400">
          <path d="M1 2h18v10.500H1zM10 12.500v3.500M6 16.300h8" />
        </svg>
        <div className="mt-[2px] h-[3px] w-6 bg-[#117865]" />
      </div>
      <svg width="14" height="22" viewBox="0 0 14 22" className="mt-[4px] ml-[25px]" fill="none" stroke="#605e5c" strokeWidth="1.400">
        <rect x="1" y="1" width="12" height="19.500" rx="1" />
        <path d="M6 17.500h2" strokeWidth="2" />
      </svg>
      <svg width="26" height="10" viewBox="0 0 26 10" className="mt-[13px] ml-[21px]" fill="#c8c6c4">
        <path d="M5 0v9L.500 4.500zM21.500 0v9L26 4.500z" />
      </svg>
      <div className={tab + " ml-[7px] w-[151px] border-r border-l border-[#b3b0ad] font-semibold"}>
        <div className="h-[30px] tracking-[-0.36px]">Salary Data by State</div>
        <div className="h-[5px] bg-[#117865]" />
      </div>
      <div className={tab + " w-[163px] border-r border-[#c8c6c4] pl-px"}>Salary Data by Industry</div>
      <div className={tab + " w-[129px] border-r border-[#c8c6c4]"}>Job Data by Year</div>
      <div className="flex w-[39px] items-center justify-center bg-[#117865]">
        <svg width="11" height="11" viewBox="0 0 11 11" stroke="#fff" strokeWidth="2.600">
          <path d="M5.500 0v11M0 5.500h11" />
        </svg>
      </div>
    </div>
  );
}

function StatusBar() {
  return (
    <footer className="flex h-[25px] items-start border-t border-b border-t-[#dedcda] border-b-black bg-[#f3f2f1] text-[11.5px] text-[#484644]">
      <div className="ml-1 w-[1032px] shrink-0 leading-[25px] tracking-[0.05px]">Page 1 of 3</div>
      <svg width="124" height="14" viewBox="0 0 124 14" className="mt-[5px] shrink-0" stroke="#605e5c" fill="none">
        <path d="M0 7h5" strokeWidth="2" />
        <path d="M9 6.500H109M59.500 3.500v6M115.500 6.500h7M119 3v7" />
        <path d="M50 1v11" strokeWidth="4" />
      </svg>
      <div className="ml-[12px] w-[30px] shrink-0 leading-[24px] whitespace-nowrap">83%</div>
      <svg width="16" height="12" viewBox="0 0 16 12" className="mt-[6px] ml-[12px] shrink-0" fill="none" stroke="#605e5c">
        <path d="M.500.500h15v11H.500zM3 5V3.500h2M11 3.500h2V5M13 7v1.500h-2M5 8.500H3V7" />
      </svg>
      <div className="ml-[14px] leading-[25px] whitespace-nowrap">Update available (click to download)</div>
    </footer>
  );
}

export default function App() {
  return (
    <div className="flex h-[806px] w-[1440px] flex-col overflow-hidden bg-white font-['Open_Sans','Noto_Sans',sans-serif]">
      <TitleBar />
      <RibbonTabs />
      <Toolbar />
      <main className="flex h-[671px] shadow-[inset_0_3px_3px_-2px_rgba(0,0,0,0.18)]">
        <ViewRail />
        <div className="flex w-[1329px] shrink-0 flex-col">
          <div className="flex h-[636px]">
            <div className="flex-1 pt-2 pl-[115px]">
              <ReportCanvas />
            </div>
            <Pane title="Filters" className="w-[33px] border-l border-[#a19f9d]">
              <svg width="13" height="13" viewBox="0 0 13 13" fill="none" stroke="#3b3a39" strokeWidth="1.300" className="mt-[16px] mb-[8px] ml-[2px] block rotate-90">
                <path d="M.700 1h11.600L8 5.500V12H5V5.500z" />
              </svg>
            </Pane>
          </div>
          <PageTabs />
        </div>
        <Pane title="Visualizations" className="w-[35px] gap-[15px] border-l border-[#dedcda] bg-[#f3f2f1]" />
        <Pane title="Data" className="w-[35px] gap-[15px] border-l border-[#dedcda] bg-[#f3f2f1]" />
      </main>
      <StatusBar />
    </div>
  );
}
